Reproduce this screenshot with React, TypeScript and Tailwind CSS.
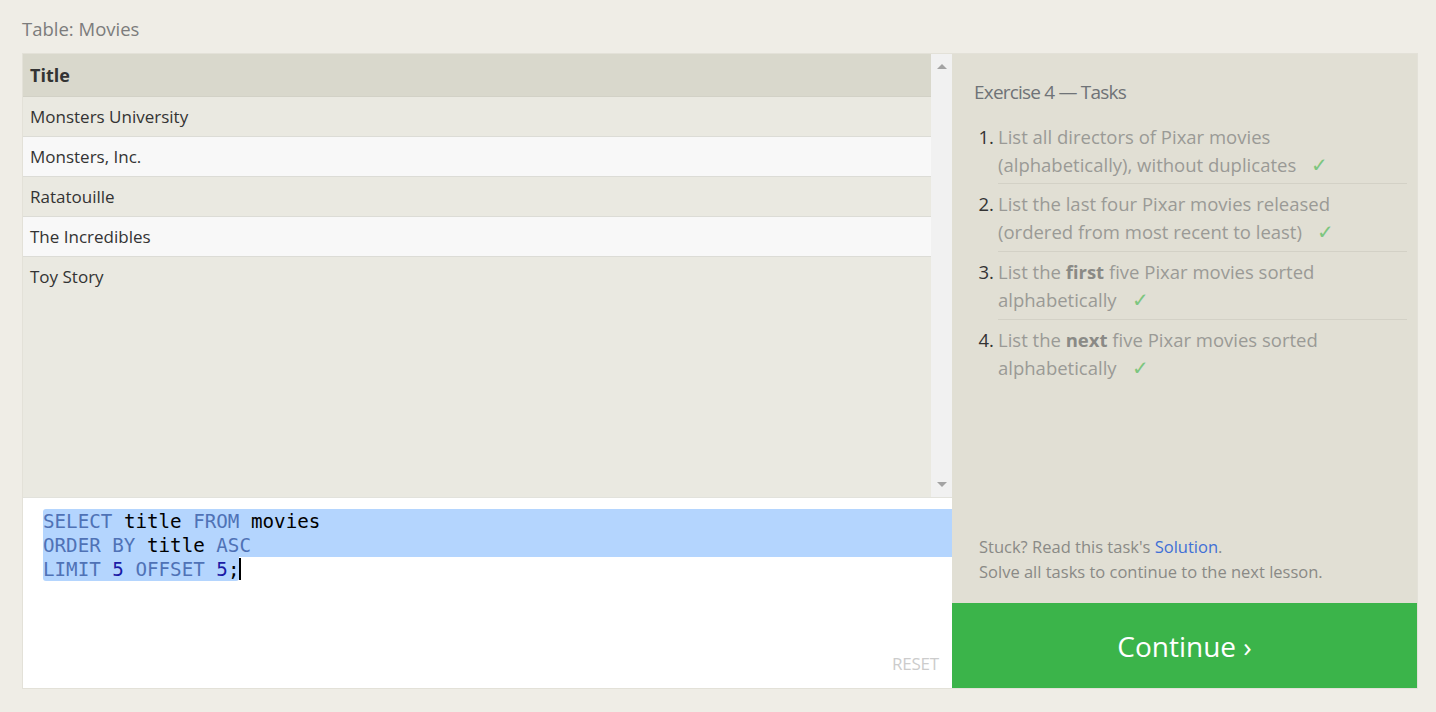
import React from 'react';

const rows = ['Monsters University', 'Monsters, Inc.', 'Ratatouille', 'The Incredibles', 'Toy Story'];

const Check = () => <span className="ml-[15px] text-[20px] text-[#7dc67f]">✓</span>;

export default function App() {
  const sans = { fontFamily: '"Open Sans", "Noto Sans", sans-serif' };
  return (
    <div className="min-h-screen w-full bg-[#efede6] pl-[22px] pr-[18px] pt-[17px]" style={sans}>
      <div className="text-[18.5px] leading-[24px] text-[#7c7c7c] mb-[12px]">Table: Movies</div>

      <div className="flex h-[636px] border border-[#e3e1d8]">
        {/* Left: table + editor */}
        <div className="w-[929px] flex flex-col">
          <div className="h-[443px] flex bg-[#eae9e1]">
            <div className="flex-1">
              <div className="h-[43px] bg-[#d9d8cc] flex items-center px-[7px] text-[18px] font-bold text-[#333] border-b border-[#d2d1c6]">
                Title
              </div>
              {rows.map((r, i) => (
                <div
                  key={r}
                  className={`h-[40px] flex items-center px-[7px] text-[17px] text-[#333] ${
                    i < rows.length - 1 ? 'border-b border-[#dcdcd6]' : ''
                  } ${i % 2 === 0 ? 'bg-[#eae9e1]' : 'bg-[#f8f8f8]'}`}
                >
                  {r}
                </div>
              ))}
            </div>
            <div className="w-[21px] bg-[#f1f1f1] flex flex-col items-center justify-between py-[10px]">
              <div className="w-0 h-0 border-l-[5px] border-r-[5px] border-b-[5px] border-l-transparent border-r-transparent border-b-[#a3a3a3]" />
              <div className="w-0 h-0 border-l-[5px] border-r-[5px] border-t-[5px] border-l-transparent border-r-transparent border-t-[#a3a3a3]" />
            </div>
          </div>

          {/* Editor */}
          <div className="flex-1 bg-white relative border-t border-[#e2e2dc] pt-[11px]">
            <div
              className="text-[19.2px] leading-[24px] pl-[20px]"
              style={{ fontFamily: '"DejaVu Sans Mono", "Liberation Mono", monospace' }}
            >
              <div className="bg-[#b4d5fe] rounded-tl-[3px] w-full whitespace-pre pt-[1px] h-[24px]">
                <span className="text-[#4f72b6]">SELECT</span> <span className="text-black">title</span>{' '}
                <span className="text-[#4f72b6]">FROM</span> <span className="text-black">movies</span>
              </div>
              <div className="bg-[#b4d5fe] w-full whitespace-pre pt-[1px] h-[24px]">
                <span className="text-[#4f72b6]">ORDER BY</span> <span className="text-black">title</span>{' '}
                <span className="text-[#4f72b6]">ASC</span>
              </div>
              <div className="flex items-center">
                <span className="bg-[#b4d5fe] rounded-b-[3px] whitespace-pre pt-[1px] h-[24px]">
                  <span className="text-[#4f72b6]">LIMIT</span> <span className="text-[#1a1aa6]">5</span>{' '}
                  <span className="text-[#4f72b6]">OFFSET</span> <span className="text-[#1a1aa6]">5</span>
                  <span className="text-black">;</span>
                </span>
                <span className="w-[2px] h-[22px] bg-black" />
              </div>
            </div>
            <div className="absolute right-[13px] bottom-[12px] text-[17px] text-[#cccccc] tracking-[-0.2px]">RESET</div>
          </div>
        </div>

        {/* Right: tasks */}
        <div className="flex-1 flex flex-col">
          <div className="flex-1 bg-[#e1dfd4] pl-[22px] pr-[10px] pt-[25px] flex flex-col">
            <div className="text-[19px] leading-[26px] text-[#6f7377] tracking-[-0.8px]">Exercise 4 — Tasks</div>
            <ol className="mt-[18px] text-[18.5px] leading-[28px] text-[#9a9a96]">
              <li className="flex">
                <span className="w-[24px] text-[#333] text-right pr-[4px]">1.</span>
                <div className="flex-1 border-b border-[#d3d1c6] pb-[4px]">
                  List all directors of Pixar movies<br />
                  (alphabetically), without duplicates
                  <Check />
                </div>
              </li>
              <li className="flex pt-[6px]">
                <span className="w-[24px] text-[#333] text-right pr-[4px]">2.</span>
                <div className="flex-1 border-b border-[#d3d1c6] pb-[5px]">
                  List the last four Pixar movies released<br />
                  (ordered from most recent to least)
                  <Check />
                </div>
              </li>
              <li className="flex pt-[6px]">
                <span className="w-[24px] text-[#333] text-right pr-[4px]">3.</span>
                <div className="flex-1 border-b border-[#d3d1c6] pb-[5px]">
                  List the <b className="text-[#8a8a86]">first</b> five Pixar movies sorted<br />
                  alphabetically
                  <Check />
                </div>
              </li>
              <li className="flex pt-[6px]">
                <span className="w-[24px] text-[#333] text-right pr-[4px]">4.</span>
                <div className="flex-1">
                  List the <b className="text-[#8a8a86]">next</b> five Pixar movies sorted<br />
                  alphabetically
                  <Check />
                </div>
              </li>
            </ol>
            <div className="mt-auto mb-[19px] pl-[5px] text-[16.5px] leading-[25px] text-[#8a8a86]">
              Stuck? Read this task's <span className="text-[#3f6fd6]">Solution</span>.<br />
              Solve all tasks to continue to the next lesson.
            </div>
          </div>
          <div className="h-[85px] bg-[#3bb44a] flex items-center justify-center text-white text-[28px]">
            Continue ›
          </div>
        </div>
      </div>
    </div>
  );
}
